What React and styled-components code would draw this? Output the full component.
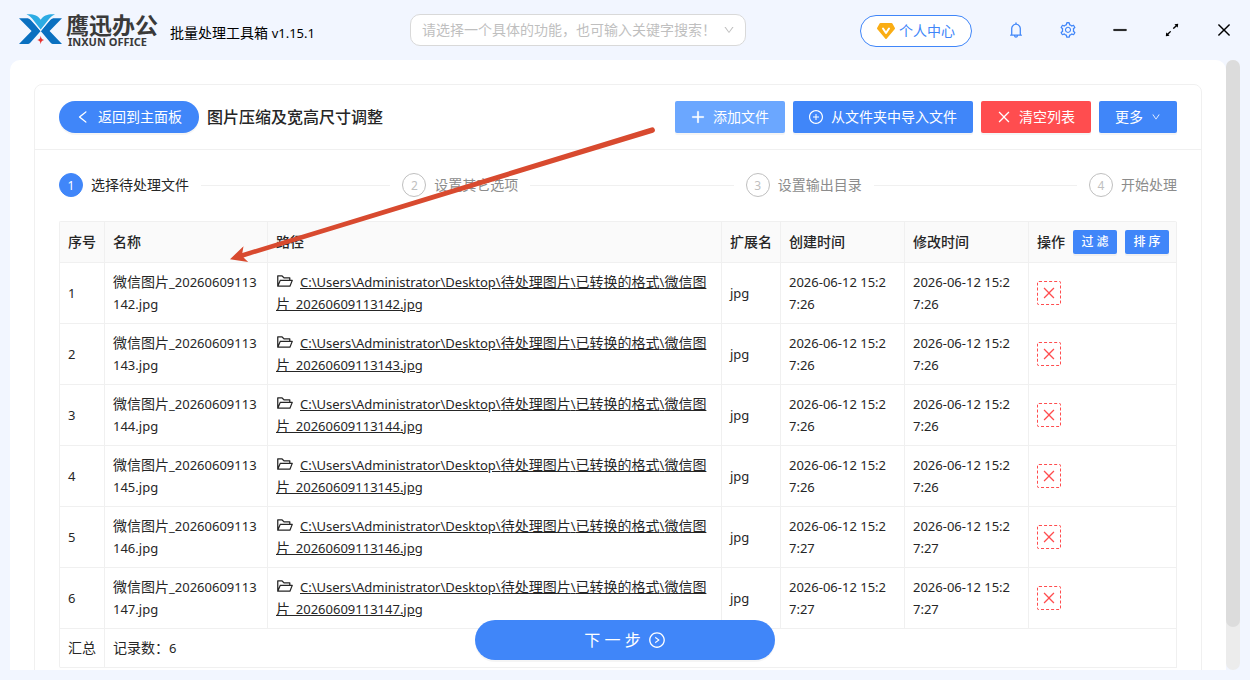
import React from "react";
import styled, { createGlobalStyle, css } from "styled-components";
import {
  AiOutlineArrowsAlt,
  AiOutlineBell,
  AiOutlineClose,
  AiOutlineDown,
  AiOutlineFolderOpen,
  AiOutlineLeft,
  AiOutlineMinus,
  AiOutlinePlus,
  AiOutlinePlusCircle,
  AiOutlineRightCircle,
  AiOutlineSetting,
} from "react-icons/ai";

const blue = "#4086f9";
const line = "#f0f0f0";
const ink = "#262626";

const GlobalStyle = createGlobalStyle`
  * { box-sizing: border-box; }
  body {
    margin: 0;
    background: #f2f6ff;
    color: ${ink};
    font: 14px/22px "Noto Sans", "Noto Sans CJK SC", sans-serif;
  }
  button, select { font: inherit; cursor: pointer; }
  svg { flex: none; }
`;

const Window = styled.div`
  position: relative;
  display: flex;
  flex-direction: column;
  height: 100vh;
  min-width: 1100px;
  padding-bottom: 10px;
  overflow: hidden;
`;

const TitleBar = styled.header`
  display: flex;
  align-items: center;
  flex: none;
  height: 60px;
  padding-left: 18px;
`;

const Brand = styled.div`
  display: flex;
  align-items: center;
  flex: 0 0 392px;
`;

const LogoText = styled.div`
  display: flex;
  flex-direction: column;
  margin: 0 12px 0 4px;
  padding-bottom: 2px;
  color: #3a3a3a;
  font-weight: 700;
`;

const LogoName = styled.span`
  font-size: 23px;
  line-height: 24px;
`;

const LogoLatin = styled.span`
  padding-left: 2px;
  font-size: 11px;
  line-height: 9px;
`;

const AppName = styled.span`
  padding-top: 5px;
  color: #000;
`;

const Latin = styled.span`
  font-size: 13px;
  line-height: 1;
`;

const SearchBox = styled.label`
  display: flex;
  align-items: center;
  flex: 0 0 336px;
  height: 32px;
  padding-right: 10px;
  border: 1px solid #d9d9d9;
  border-radius: 10px;
  background: #fff;
  color: #bfbfbf;
`;

const SearchSelect = styled.select`
  flex: 1;
  min-width: 0;
  height: 30px;
  padding: 0 0 0 11px;
  border: 0;
  outline: 0;
  background: transparent;
  color: inherit;
  appearance: none;
`;

const WindowTools = styled.div`
  display: flex;
  align-items: center;
  margin-left: auto;
`;

const ProfileButton = styled.button`
  display: flex;
  align-items: center;
  gap: 4px;
  height: 32px;
  margin: 2px 18px 0 0;
  padding: 0 16px;
  border: 1px solid ${blue};
  border-radius: 16px;
  background: #fff;
  color: ${blue};
`;

const ToolButton = styled.button`
  display: flex;
  align-items: center;
  justify-content: center;
  width: 52px;
  height: 32px;
  padding: 0;
  border: 0;
  background: transparent;
  color: ${(p) => (p.$accent ? blue : "#000")};
`;

const Viewport = styled.div`
  display: flex;
  flex: 1;
  min-height: 0;
  padding: 0 10px;
`;

const Panel = styled.main`
  flex: 1;
  min-width: 0;
  padding: 24px;
  overflow: hidden;
  border-radius: 10px 10px 0 0;
  background: #fff;
`;

const ScrollTrack = styled.div`
  flex: 0 0 14px;
  border-radius: 7px;
  background: #ececec;
`;

const ScrollThumb = styled.div`
  height: 93%;
  border-radius: 7px;
  background: #dcdcdc;
`;

const Card = styled.section`
  border: 1px solid ${line};
  border-radius: 8px;
`;

const CardHead = styled.div`
  display: flex;
  align-items: center;
  gap: 8px;
  padding: 16px 24px;
  border-bottom: 1px solid ${line};
`;

const Heading = styled.h1`
  flex: 1;
  margin: 0;
  font-size: 16px;
  line-height: 24px;
  font-weight: 500;
`;

const tones = { primary: blue, light: "#6ba7ff", danger: "#ff4d4f" };

const Button = styled.button`
  display: flex;
  align-items: center;
  justify-content: center;
  gap: ${(p) => (p.$menu ? 8 : 7)}px;
  height: 32px;
  padding: 0 16px 0 ${(p) => (p.$menu ? 16 : 15)}px;
  border: 0;
  border-radius: 2px;
  background: ${(p) => tones[p.$tone || "primary"]};
  box-shadow: 0 2px 0 rgba(0, 0, 0, 0.04);
  color: #fff;
  ${(p) =>
    p.$round &&
    css`
      padding: 0 17px 0 16px;
      border-radius: 16px;
    `}
`;

const PlusIcon = styled(AiOutlinePlus)`
  stroke-width: 40px;
`;

const MinimizeIcon = styled(AiOutlineMinus)`
  stroke-width: 20px;
`;

const CardBody = styled.div`
  padding: 23px 24px 24px;
`;

const Steps = styled.ol`
  display: flex;
  gap: 12px;
  margin: 0 0 24px;
  padding: 0;
  list-style: none;
`;

const Step = styled.li`
  display: flex;
  align-items: center;
  flex: 1;
  color: ${(p) => (p.$active ? ink : "#8c8c8c")};

  &:last-child {
    flex: none;
  }

  &:not(:last-child)::after {
    content: "";
    flex: 1;
    height: 1px;
    margin-left: 12px;
    background: ${line};
  }
`;

const StepNumber = styled.span`
  display: flex;
  align-items: center;
  justify-content: center;
  width: 24px;
  height: 24px;
  margin-right: 8px;
  padding-top: 2px;
  border: 1px solid ${(p) => (p.$active ? blue : "#bfbfbf")};
  border-radius: 50%;
  background: ${(p) => (p.$active ? blue : "#fff")};
  color: ${(p) => (p.$active ? "#fff" : "#bfbfbf")};
  font-size: 12px;
`;

const FileTable = styled.table`
  width: 100%;
  table-layout: fixed;
  border-collapse: separate;
  border-spacing: 0;
  border: solid ${line};
  border-width: 1px 0 0 1px;
  border-radius: 2px;
`;

const Col = styled.col`
  width: ${(p) => (p.$width ? `${p.$width}px` : "auto")};
`;

const HeadCell = styled.th`
  padding: 8px 4px 8px 8px;
  border: solid ${line};
  border-width: 0 1px 1px 0;
  background: #fafafa;
  font-weight: 500;
  text-align: left;
  white-space: nowrap;
`;

const Cell = styled.td`
  padding: 8px;
  border: solid ${line};
  border-width: 0 1px 1px 0;
  word-break: break-all;
`;

const DateCell = styled(Cell)`
  padding-right: 16px;
  font-size: 13px;
`;

const Actions = styled.div`
  display: flex;
  align-items: center;
  gap: 8px;
`;

const SmallButton = styled.button`
  flex: none;
  width: 44px;
  height: 24px;
  padding: 0;
  border: 0;
  border-radius: 2px;
  background: ${blue};
  box-shadow: 0 2px 0 rgba(0, 0, 0, 0.04);
  color: #fff;
  font-size: 12px;
`;

const DeleteButton = styled.button`
  display: flex;
  align-items: center;
  justify-content: center;
  width: 24px;
  height: 24px;
  padding: 0;
  border: 1px dashed #ff4d4f;
  border-radius: 2px;
  background: #fff;
  color: #ff4d4f;
`;

const FolderIcon = styled(AiOutlineFolderOpen)`
  margin-right: 6px;
  vertical-align: -3px;
`;

const PathLink = styled.a`
  color: inherit;
  text-decoration: underline;
`;

const NextBar = styled.div`
  position: absolute;
  right: 0;
  bottom: 20px;
  left: 0;
  display: flex;
  justify-content: center;
  pointer-events: none;
`;

const NextButton = styled.button`
  display: flex;
  align-items: center;
  justify-content: center;
  gap: 7px;
  width: 300px;
  height: 40px;
  border: 0;
  border-radius: 20px;
  background: ${blue};
  box-shadow: 0 2px 0 rgba(0, 0, 0, 0.04);
  color: #fff;
  font-size: 16px;
  pointer-events: auto;
`;

const Pointer = styled.svg`
  position: absolute;
  top: 120px;
  left: 220px;
  pointer-events: none;
`;

function Logo() {
  return (
    <svg width="44" height="32" viewBox="0 0 44 32" aria-hidden="true">
      <path fill="#0a70c0" d="M1 4.200h7.500c2 0 3 .6 4.200 1.800L22.700 17 12.500 28.600c-1 1-1.900 1.500-3.500 1.500H1L13.600 17z" />
      <path fill="#0a70c0" d="M44 4.200h-7.500c-2 0-3 .6-4.200 1.800L22.700 17l9.700 11.600c1 1 1.900 1.500 3.500 1.500H44L31.600 17z" />
      <path fill="#f2f6ff" d="M12.200 4 22.700 17.400 33.200 4z" />
      <path fill="#2cabe3" d="M8.500.4c6.500-.5 11.500 1 14.200 5.400C25.400 1.400 30.400-.1 37 .4c-2.600.8-4.200 2.200-5.800 4.400L22.700 15.500 14.300 4.800C12.700 2.600 11.100 1.200 8.500.4z" />
      <path fill="#f2f6ff" d="M22.700 19.500 31 30.200H14.400z" />
      <path fill="#e8322f" d="M22.700 21.800c.4 2.700 1.200 3.600 3.500 4.200-2.300.6-3.100 1.500-3.500 4.200-.4-2.700-1.200-3.600-3.500-4.200 2.300-.6 3.100-1.500 3.500-4.200z" />
    </svg>
  );
}

function Gem() {
  return (
    <svg width="18" height="16" viewBox="0 0 18 16" aria-hidden="true">
      <path fill="#faad14" d="M3.500 0h11c.4 0 .7.2.9.500l2.400 4.300c.3.500.2 1-.2 1.400l-8 9.500c-.3.400-.9.400-1.200 0l-8-9.500c-.4-.4-.5-.9-.2-1.400L2.600.5c.2-.3.500-.5.900-.5z" />
      <path fill="none" stroke="#fff" strokeWidth="2" strokeLinecap="round" strokeLinejoin="round" d="M6 5.500 9 10l3-4.500" />
    </svg>
  );
}

const steps = ["选择待处理文件", "设置其它选项", "设置输出目录", "开始处理"];

const files = [
  ["142", "26"],
  ["143", "26"],
  ["144", "26"],
  ["145", "26"],
  ["146", "27"],
  ["147", "27"],
].map(([id, seconds]) => ({
  id,
  prefix: "_20260609113",
  time: `2026-06-12 15:27:${seconds}`,
}));

function FileRow({ index, file }) {
  return (
    <tr>
      <Cell>
        <Latin>{index}</Latin>
      </Cell>
      <Cell>
        微信图片<Latin>{file.prefix}</Latin>
        <wbr />
        <Latin>{`${file.id}.jpg`}</Latin>
      </Cell>
      <Cell>
        <FolderIcon size={18} />
        <PathLink href="#">
          <Latin>{"C:\\Users\\Administrator\\Desktop\\"}</Latin>待处理图片
          <Latin>\</Latin>已转换的格式<Latin>\</Latin>微信图
          <wbr />片<Latin>{`${file.prefix}${file.id}.jpg`}</Latin>
        </PathLink>
      </Cell>
      <Cell>
        <Latin>jpg</Latin>
      </Cell>
      <DateCell>{file.time}</DateCell>
      <DateCell>{file.time}</DateCell>
      <Cell>
        <DeleteButton aria-label="删除">
          <AiOutlineClose size={16} />
        </DeleteButton>
      </Cell>
    </tr>
  );
}

export default function App() {
  return (
    <Window>
      <GlobalStyle />
      <TitleBar>
        <Brand>
          <Logo />
          <LogoText>
            <LogoName>鹰迅办公</LogoName>
            <LogoLatin>INXUN OFFICE</LogoLatin>
          </LogoText>
          <AppName>
            批量处理工具箱 <Latin>v1.15.1</Latin>
          </AppName>
        </Brand>
        <SearchBox>
          <SearchSelect aria-label="功能搜索">
            <option>请选择一个具体的功能，也可输入关键字搜索！</option>
          </SearchSelect>
          <AiOutlineDown size={12} />
        </SearchBox>
        <WindowTools>
          <ProfileButton>
            <Gem />
            个人中心
          </ProfileButton>
          <ToolButton $accent aria-label="通知">
            <AiOutlineBell size={18} />
          </ToolButton>
          <ToolButton $accent aria-label="设置">
            <AiOutlineSetting size={18} />
          </ToolButton>
          <ToolButton aria-label="最小化">
            <MinimizeIcon size={18} />
          </ToolButton>
          <ToolButton aria-label="最大化">
            <AiOutlineArrowsAlt size={18} />
          </ToolButton>
          <ToolButton aria-label="关闭">
            <AiOutlineClose size={18} />
          </ToolButton>
        </WindowTools>
      </TitleBar>

      <Viewport>
        <Panel>
          <Card>
            <CardHead>
              <Button $round>
                <AiOutlineLeft size={16} />
                返回到主面板
              </Button>
              <Heading>图片压缩及宽高尺寸调整</Heading>
              <Button $tone="light">
                <PlusIcon size={16} />
                添加文件
              </Button>
              <Button>
                <AiOutlinePlusCircle size={16} />
                从文件夹中导入文件
              </Button>
              <Button $tone="danger">
                <AiOutlineClose size={16} />
                清空列表
              </Button>
              <Button $menu>
                更多
                <AiOutlineDown size={10} />
              </Button>
            </CardHead>
            <CardBody>
              <Steps>
                {steps.map((name, i) => (
                  <Step key={name} $active={i === 0}>
                    <StepNumber $active={i === 0}>{i + 1}</StepNumber>
                    {name}
                  </Step>
                ))}
              </Steps>
              <FileTable>
                <colgroup>
                  <Col $width={45} />
                  <Col $width={163} />
                  <Col />
                  <Col $width={59} />
                  <Col $width={124} />
                  <Col $width={124} />
                  <Col $width={148} />
                </colgroup>
                <thead>
                  <tr>
                    <HeadCell>序号</HeadCell>
                    <HeadCell>名称</HeadCell>
                    <HeadCell>路径</HeadCell>
                    <HeadCell>扩展名</HeadCell>
                    <HeadCell>创建时间</HeadCell>
                    <HeadCell>修改时间</HeadCell>
                    <HeadCell>
                      <Actions>
                        操作
                        <SmallButton>过 滤</SmallButton>
                        <SmallButton>排 序</SmallButton>
                      </Actions>
                    </HeadCell>
                  </tr>
                </thead>
                <tbody>
                  {files.map((file, i) => (
                    <FileRow key={file.id} index={i + 1} file={file} />
                  ))}
                </tbody>
                <tfoot>
                  <tr>
                    <Cell>汇总</Cell>
                    <Cell colSpan={6}>
                      记录数：<Latin>6</Latin>
                    </Cell>
                  </tr>
                </tfoot>
              </FileTable>
            </CardBody>
          </Card>
        </Panel>
        <ScrollTrack>
          <ScrollThumb />
        </ScrollTrack>
      </Viewport>

      <NextBar>
        <NextButton>
          下 一 步
          <AiOutlineRightCircle size={18} />
        </NextButton>
      </NextBar>

      <Pointer width="440" height="150" viewBox="0 0 440 150" aria-hidden="true">
        <path
          fill="#d84a2f"
          d="M10 139.200 23.500 126.300 22.300 133 431.300 7.600a2.700 2.700 0 0 1 1.800 5.100L23.500 137.400 28.200 142z"
        />
      </Pointer>
    </Window>
  );
}
